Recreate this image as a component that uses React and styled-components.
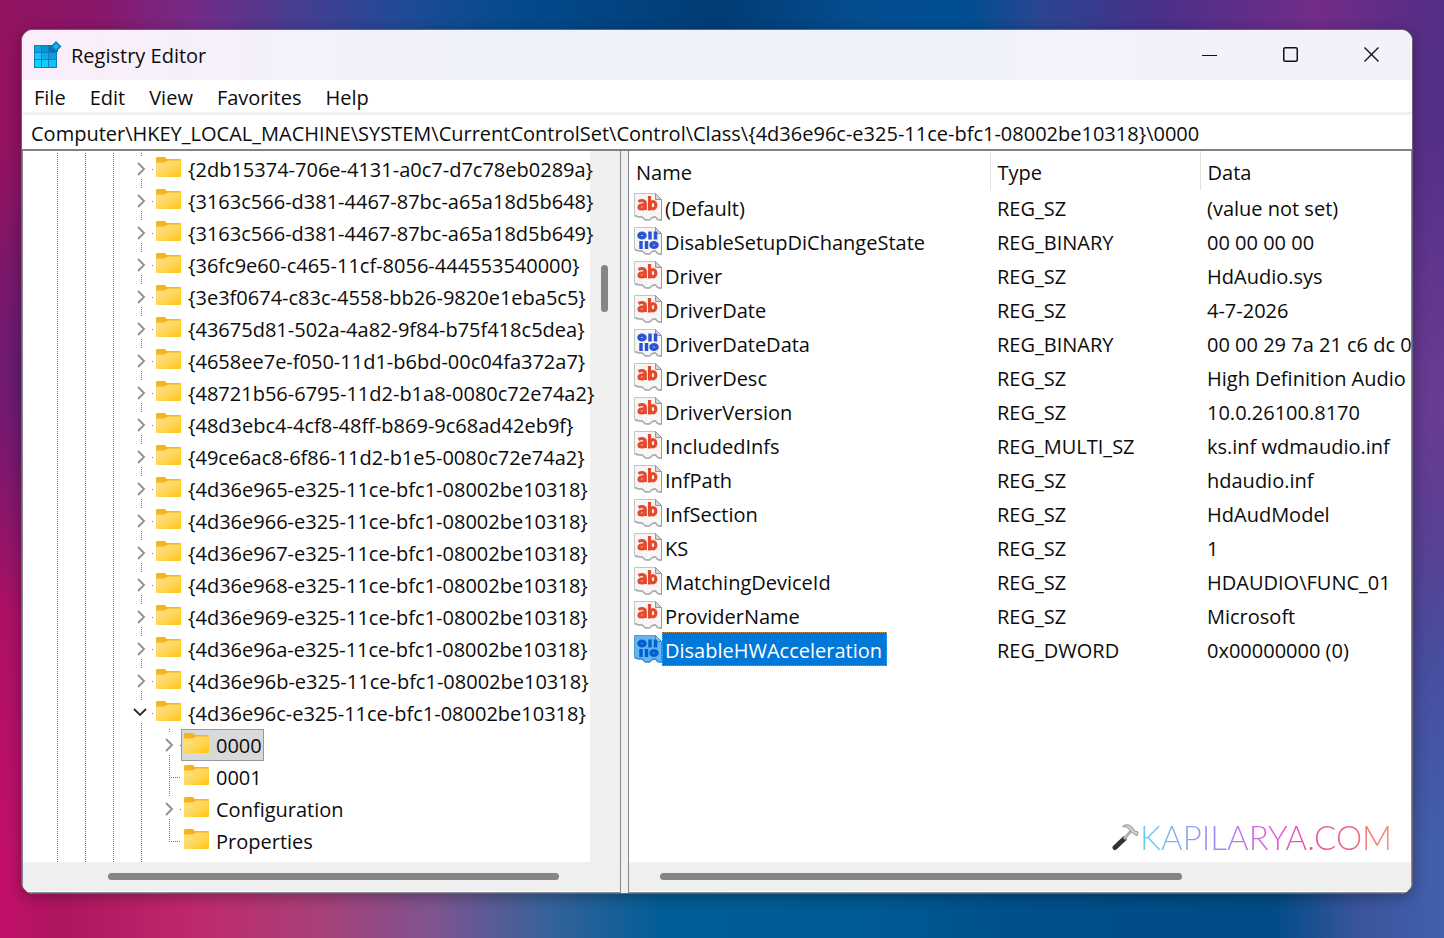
import React, { useState } from 'react';
// Styling
import styled, { createGlobalStyle } from 'styled-components';

// Data
const treeKeys = [
	'{2db15374-706e-4131-a0c7-d7c78eb0289a}',
	'{3163c566-d381-4467-87bc-a65a18d5b648}',
	'{3163c566-d381-4467-87bc-a65a18d5b649}',
	'{36fc9e60-c465-11cf-8056-444553540000}',
	'{3e3f0674-c83c-4558-bb26-9820e1eba5c5}',
	'{43675d81-502a-4a82-9f84-b75f418c5dea}',
	'{4658ee7e-f050-11d1-b6bd-00c04fa372a7}',
	'{48721b56-6795-11d2-b1a8-0080c72e74a2}',
	'{48d3ebc4-4cf8-48ff-b869-9c68ad42eb9f}',
	'{49ce6ac8-6f86-11d2-b1e5-0080c72e74a2}',
	'{4d36e965-e325-11ce-bfc1-08002be10318}',
	'{4d36e966-e325-11ce-bfc1-08002be10318}',
	'{4d36e967-e325-11ce-bfc1-08002be10318}',
	'{4d36e968-e325-11ce-bfc1-08002be10318}',
	'{4d36e969-e325-11ce-bfc1-08002be10318}',
	'{4d36e96a-e325-11ce-bfc1-08002be10318}',
	'{4d36e96b-e325-11ce-bfc1-08002be10318}',
	'{4d36e96c-e325-11ce-bfc1-08002be10318}',
];

const childKeys = [
	{ name: '0000', line: 'node', selected: true },
	{ name: '0001', line: 'leaf' },
	{ name: 'Configuration', line: 'node' },
	{ name: 'Properties', line: 'last' },
];

const values = [
	['(Default)', 'REG_SZ', '(value not set)'],
	['DisableSetupDiChangeState', 'REG_BINARY', '00 00 00 00'],
	['Driver', 'REG_SZ', 'HdAudio.sys'],
	['DriverDate', 'REG_SZ', '4-7-2026'],
	['DriverDateData', 'REG_BINARY', '00 00 29 7a 21 c6 dc 0'],
	['DriverDesc', 'REG_SZ', 'High Definition Audio'],
	['DriverVersion', 'REG_SZ', '10.0.26100.8170'],
	['IncludedInfs', 'REG_MULTI_SZ', 'ks.inf wdmaudio.inf'],
	['InfPath', 'REG_SZ', 'hdaudio.inf'],
	['InfSection', 'REG_SZ', 'HdAudModel'],
	['KS', 'REG_SZ', '1'],
	['MatchingDeviceId', 'REG_SZ', 'HDAUDIO\\FUNC_01'],
	['ProviderName', 'REG_SZ', 'Microsoft'],
	['DisableHWAcceleration', 'REG_DWORD', '0x00000000 (0)'],
];

// ICONS
const RegeditIcon = () => (
	<svg width='28' height='28' viewBox='0 0 28 28' aria-hidden='true'>
		<rect x='0' y='4' width='23' height='23' fill='#0a7fc0' />
		<rect x='1' y='5' width='6' height='6' fill='#12a4e0' />
		<rect x='8' y='5' width='6' height='6' fill='#0a93d2' />
		<rect x='1' y='12' width='6' height='6' fill='#1fc4fa' />
		<rect x='8' y='12' width='6' height='6' fill='#12a9e6' />
		<rect x='15' y='12' width='7' height='6' fill='#0d9ddb' />
		<rect x='1' y='19' width='6' height='7' fill='#16cdff' />
		<rect x='8' y='19' width='6' height='7' fill='#16cdff' />
		<rect x='15' y='19' width='7' height='7' fill='#16bff5' />
		<path d='M15 4h5l4 5v2h-9z' fill='#0871b5' />
		<path d='M22 0l5.500 5.500-5.500 5.500-5.500-5.500z' fill='#0b83bd' />
		<path d='M22 2.500l3 3-3 3-3-3z' fill='#27b2e2' />
	</svg>
);

const FolderIcon = () => (
	<svg width='25' height='24' viewBox='0 0 25 24' aria-hidden='true'>
		<defs>
			<linearGradient id='folder' x1='0' y1='0' x2='1' y2='1'>
				<stop offset='0' stopColor='#ffe08a' />
				<stop offset='0.5' stopColor='#ffd65c' />
				<stop offset='1' stopColor='#ffc60f' />
			</linearGradient>
		</defs>
		<path d='M0 1.500Q0 0 1.500 0H8q1 0 1.600.700L11 2h13q1 0 1 1v4H0z' fill='#f9b21a' />
		<path d='M0 5.500h8.500q1 0 1.700-.800L11.500 3.500H24q1 0 1 1V19q0 1-1 1H1q-1 0-1-1z' fill='url(#folder)' />
	</svg>
);

const ValueIcon = ({ binary, selected }) => (
	<svg width='28' height='28' viewBox='0 0 28 28' aria-hidden='true'>
		<path
			d='M.500.500H21.500L27.500 6.500V27l-4-1-2-2.500-3 .5-3 2.500h-4L8 23.500H4.500L.500 22z'
			fill={selected ? '#66b5ee' : '#f6f6f6'}
			stroke={selected ? '#4a9fd8' : '#c4c4c4'}
		/>
		<path
			d='M.500 22.500l4 1.500h3.500l3.500 3h4l3-2.500 3-.5 2 2.500 4 1'
			fill='none'
			stroke={selected ? '#3a8fc8' : '#ababab'}
			strokeWidth='1.500'
		/>
		<path d='M21.500.500V6.500H27.500z' fill={selected ? '#8cc9f2' : '#d4d4d4'} stroke={selected ? '#3a8fc8' : '#979797'} />
		<path d='M27.500 6.500V27.500' stroke={selected ? '#3a8fc8' : '#9b9b9b'} />
		{binary ? (
			<g fill='none' stroke={selected ? '#0060cf' : '#2b55cf'} strokeWidth='3.500'>
				<ellipse cx='8' cy='8.500' rx='3' ry='2.200' />
				<path d='M16 4.500v8M21.500 4.500v8M7 14v8M12.500 14v8' />
				<ellipse cx='20' cy='18' rx='3' ry='2.200' />
			</g>
		) : (
			<g fill='none' stroke='#e5482a' strokeWidth='3.200'>
				<path d='M4.500 8.500q4-2 6 0 .8.800.8 2.500v6M11 12q-6-.5-6 2 0 2 2.500 2 2.500 0 3.500-2' />
				<path d='M15.500 3v14.500' />
				<ellipse cx='19' cy='12.200' rx='2.800' ry='3.700' />
			</g>
		)}
	</svg>
);

const Chevron = ({ open }) => (
	<svg width='14' height='14' viewBox='0 0 14 14' fill='none' aria-hidden='true'>
		{open ? <path d='M1 3l6 6 6-6' stroke='#2b2b2b' strokeWidth='1.800' /> : <path d='M5 1l6 6-6 6' stroke='#8f8f8f' strokeWidth='1.800' />}
	</svg>
);

const HammerIcon = () => (
	<svg width='28' height='28' viewBox='0 0 28 28' fill='none' aria-hidden='true'>
		<path d='M3 24.500L12 16' stroke='#333' strokeWidth='5' strokeLinecap='round' />
		<path d='M12 16L19 8' stroke='#b0b0b0' strokeWidth='3' />
		<path d='M11 3q5-3 9 1l3 4 3 1-1 4-3-2-3-2-3-4q-2-2-5-1z' fill='#cdcdcd' stroke='#9a9a9a' />
	</svg>
);

const TreeNode = ({ name, depth, line, open, selected }) => (
	<TreeRow role='treeitem' aria-selected={!!selected}>
		{Array.from({ length: depth }, (_, i) => (
			<Guide key={i} />
		))}
		<Expander as={line === 'node' ? 'button' : 'span'} $line={line} aria-label={line === 'node' ? `Expand ${name}` : undefined}>
			{line === 'node' && <Chevron open={open} />}
		</Expander>
		<KeyLabel $selected={selected}>
			<FolderIcon />
			<KeyText>{name}</KeyText>
		</KeyLabel>
	</TreeRow>
);

const App = () => {
	const [path, setPath] = useState(
		'Computer\\HKEY_LOCAL_MACHINE\\SYSTEM\\CurrentControlSet\\Control\\Class\\{4d36e96c-e325-11ce-bfc1-08002be10318}\\0000'
	);

	return (
		<Desktop>
			<GlobalStyle />
			<Window>
				<TitleBar>
					<RegeditIcon />
					<Title>Registry Editor</Title>
					<WindowButton aria-label='Minimize'>
						<svg width='16' height='16' viewBox='0 0 16 16' fill='none' stroke='#111'>
							<path d='M0 8.500h15' />
						</svg>
					</WindowButton>
					<WindowButton aria-label='Maximize'>
						<svg width='16' height='16' viewBox='0 0 16 16' fill='none' stroke='#111' strokeWidth='1.500'>
							<rect x='.750' y='.750' width='13.500' height='13.500' rx='1.500' />
						</svg>
					</WindowButton>
					<WindowButton aria-label='Close'>
						<svg width='16' height='16' viewBox='0 0 16 16' fill='none' stroke='#111' strokeWidth='1.400'>
							<path d='M.500.500l14 14M14.500.500L.500 14.500' />
						</svg>
					</WindowButton>
				</TitleBar>
				<MenuBar>
					{['File', 'Edit', 'View', 'Favorites', 'Help'].map((item) => (
						<MenuButton key={item}>{item}</MenuButton>
					))}
				</MenuBar>
				<AddressBar aria-label='Key path' value={path} onChange={(e) => setPath(e.target.value)} spellCheck={false} />
				<Panes>
					<Pane>
						<TreeArea>
							<Tree role='tree' aria-label='Keys'>
								{treeKeys.map((name, i) => (
									<TreeNode key={name} name={name} depth={3} line='node' open={i === treeKeys.length - 1} />
								))}
								{childKeys.map((child) => (
									<TreeNode key={child.name} depth={4} {...child} />
								))}
								<TreeEnd role='presentation'>
									<Guide />
									<Guide />
									<Guide />
									<Guide />
								</TreeEnd>
							</Tree>
							<VerticalScroll>
								<VerticalThumb />
							</VerticalScroll>
						</TreeArea>
						<HorizontalScroll>
							<HorizontalThumb $start={85} $size={451} />
						</HorizontalScroll>
					</Pane>
					<Splitter />
					<Pane>
						<ListArea>
							<ValueTable>
								<colgroup>
									<col width='361' />
									<col width='210' />
									<col />
								</colgroup>
								<thead>
									<tr>
										<HeadCell scope='col'>Name</HeadCell>
										<HeadCell scope='col'>Type</HeadCell>
										<HeadCell scope='col'>Data</HeadCell>
									</tr>
								</thead>
								<tbody>
									{values.map(([name, type, data]) => {
										const selected = name === 'DisableHWAcceleration';
										return (
											<tr key={name}>
												<NameCell>
													<NameFlex>
														<ValueIcon binary={type === 'REG_BINARY' || type === 'REG_DWORD'} selected={selected} />
														<ValueName $selected={selected}>{name}</ValueName>
													</NameFlex>
												</NameCell>
												<Cell>{type}</Cell>
												<Cell>{data}</Cell>
											</tr>
										);
									})}
								</tbody>
							</ValueTable>
							<Watermark>
								<HammerIcon />
								<Brand>KAPILARYA.COM</Brand>
							</Watermark>
						</ListArea>
						<HorizontalScroll>
							<HorizontalThumb $start={31} $size={522} />
						</HorizontalScroll>
					</Pane>
				</Panes>
			</Window>
		</Desktop>
	);
};

const GlobalStyle = createGlobalStyle`
	* {
		box-sizing: border-box;
	}

	body {
		margin: 0;
		font-family: 'Open Sans', 'Noto Sans', sans-serif;
		font-size: 20px;
		line-height: 28px;
		color: #0c0c0c;
	}

	button, input {
		font: inherit;
		color: inherit;
		border: none;
		background: none;
		padding: 0;
	}

	svg {
		display: block;
		flex-shrink: 0;
	}
`;

const Desktop = styled.main`
	display: flex;
	min-height: 100vh;
	padding: 29px 31px 44px 21px;
	position: relative;
	isolation: isolate;
	background: linear-gradient(
		90deg,
		#93125f 0%,
		#88176a 7%,
		#752a86 13%,
		#4a3c90 20%,
		#1f4a97 28%,
		#034a8c 36%,
		#013c75 50%,
		#044e90 60%,
		#004e90 67%,
		#2a4590 72%,
		#48308a 80%,
		#722c88 91%,
		#5c2d86 97%,
		#52308a 100%
	);

	&::before {
		content: '';
		position: absolute;
		inset: 0;
		z-index: -1;
		background: linear-gradient(
			90deg,
			#c20f6a 0%,
			#ae155f 4%,
			#bf2a6c 14%,
			#a84078 22%,
			#7e5490 30%,
			#36629a 38%,
			#005d96 46%,
			#005a94 60%,
			#00508a 70%,
			#004b86 88%,
			#3a549c 94%,
			#4260ac 100%
		);
		mask-image: linear-gradient(transparent 35%, black 90%);
	}

	&::after {
		content: '';
		position: absolute;
		inset: 0;
		z-index: -1;
		background:
			radial-gradient(60px 240px at 22px 380px, rgba(84, 32, 122, 0.8), transparent),
			radial-gradient(90px 260px at 100% 400px, rgba(112, 62, 148, 0.8), transparent);
	}
`;

const Window = styled.section`
	flex: 1;
	min-width: 0;
	display: flex;
	flex-direction: column;
	border: 1px solid #6b6378;
	border-radius: 12px;
	background: white;
	overflow: hidden;
	box-shadow: 0 3px 14px rgba(0, 0, 0, 0.3);
`;

const TitleBar = styled.header`
	display: flex;
	align-items: center;
	height: 50px;
	padding-left: 12px;
	background: linear-gradient(90deg, #fbeefa, #f4f1fb 18%, #eef3fb 45%, #f2f2fb 80%, #f3f1fa);
`;

const Title = styled.h1`
	flex: 1;
	margin: 0 0 0 9px;
	padding-top: 2px;
	font-size: 20px;
	font-weight: 400;
`;

const WindowButton = styled.button`
	display: grid;
	place-items: center;
	width: 81px;
	height: 100%;
`;

const MenuBar = styled.nav`
	display: flex;
	height: 35px;
	border-bottom: 3px solid #f0f0f0;
`;

const MenuButton = styled.button`
	padding: 4px 12px 0;
`;

const AddressBar = styled.input`
	height: 36px;
	padding: 3px 9px 0;
	border-bottom: 2px solid #828282;
	outline: none;
`;

const Panes = styled.div`
	flex: 1;
	display: grid;
	grid-template-columns: 599fr 7px 784fr;
`;

const Pane = styled.div`
	display: flex;
	flex-direction: column;
	min-width: 0;
	border: solid #828790;
	border-width: 0 1px 1px;
`;

const Splitter = styled.div`
	background: #f0f0f0;
`;

const TreeArea = styled.div`
	flex: 1;
	display: flex;
`;

const Tree = styled.ul`
	flex: 1;
	min-width: 0;
	display: flex;
	flex-direction: column;
	margin: 0;
	padding: 2px 0 0 20px;
	list-style: none;
	z-index: 1;
`;

const TreeRow = styled.li`
	display: flex;
	height: 32px;
	white-space: nowrap;
`;

const TreeEnd = styled.li`
	flex: 1;
	display: flex;
`;

const verticalDots = 'repeating-linear-gradient(#777 0 1px, transparent 1px 2px)';
const horizontalDots = 'repeating-linear-gradient(90deg, #777 0 1px, transparent 1px 2px)';

const Guide = styled.span`
	width: 28px;
	flex-shrink: 0;
	background: ${verticalDots} 14px 0 / 1px 100% no-repeat;
`;

const expanderLines = {
	node: `${verticalDots} 14px 0 / 1px 3px no-repeat, ${verticalDots} 14px 100% / 1px 6px no-repeat, ${horizontalDots} 25px 50% / 1px 1px no-repeat`,
	leaf: `${verticalDots} 14px 0 / 1px 100% no-repeat, ${horizontalDots} 14px 50% / 12px 1px no-repeat`,
	last: `${verticalDots} 14px 0 / 1px 50% no-repeat, ${horizontalDots} 14px 50% / 12px 1px no-repeat`,
};

const Expander = styled.span`
	display: grid;
	place-items: center;
	width: 26px;
	flex-shrink: 0;
	background: ${(p) => expanderLines[p.$line]};
`;

const KeyLabel = styled.span`
	display: flex;
	align-items: center;
	gap: 7px;
	padding: 0 1px 0 2px;
	border: 1px solid ${(p) => (p.$selected ? '#999' : 'transparent')};
	background: ${(p) => (p.$selected ? '#d9d9d9' : 'none')};
`;

const KeyText = styled.span`
	padding-top: 2px;
`;

const VerticalScroll = styled.div`
	width: 30px;
	padding: 114px 0 0 11px;
	background: #f0f0f0;
`;

const VerticalThumb = styled.div`
	width: 7px;
	height: 47px;
	border-radius: 4px;
	background: #858585;
`;

const HorizontalScroll = styled.div`
	display: flex;
	align-items: center;
	height: 30px;
	background: #efefef;
	border-bottom: 1px solid white;
`;

const HorizontalThumb = styled.div`
	height: 7px;
	flex: 0 1 ${(p) => p.$size}px;
	margin-left: ${(p) => p.$start}px;
	border-radius: 4px;
	background: #858585;
`;

const ListArea = styled.div`
	flex: 1;
	position: relative;
`;

const ValueTable = styled.table`
	width: 100%;
	table-layout: fixed;
	border-collapse: collapse;
	white-space: nowrap;
`;

const HeadCell = styled.th`
	height: 39px;
	padding: 4px 0 0 7px;
	font-weight: 400;
	text-align: left;

	&:not(:last-child) {
		border-right: 1px solid #e2e2e2;
	}
`;

const Cell = styled.td`
	height: 34px;
	padding: 4px 0 0 7px;
`;

const NameCell = styled.td`
	height: 34px;
	padding: 0 0 0 5px;
`;

const NameFlex = styled.div`
	display: flex;
	align-items: center;
`;

const ValueName = styled.span`
	padding: 4px 4px 0 2px;
	border: 1px dotted ${(p) => (p.$selected ? '#c98a4b' : 'transparent')};
	background: ${(p) => (p.$selected ? '#0078d7' : 'none')};
	color: ${(p) => (p.$selected ? 'white' : 'inherit')};
`;

const Watermark = styled.div`
	position: absolute;
	right: 19px;
	bottom: 8px;
	display: flex;
	align-items: center;
`;

const Brand = styled.span`
	font-family: Lato, 'Open Sans', sans-serif;
	font-size: 33px;
	font-weight: 300;
	line-height: 34px;
	color: transparent;
	background: linear-gradient(90deg, #62d2f5, #8f9df0 22%, #b07cf0 36%, #e05ae0 52%, #ea4fb0 66%, #ee5f8a 80%, #f58a6a);
	background-clip: text;
`;

export default App;
